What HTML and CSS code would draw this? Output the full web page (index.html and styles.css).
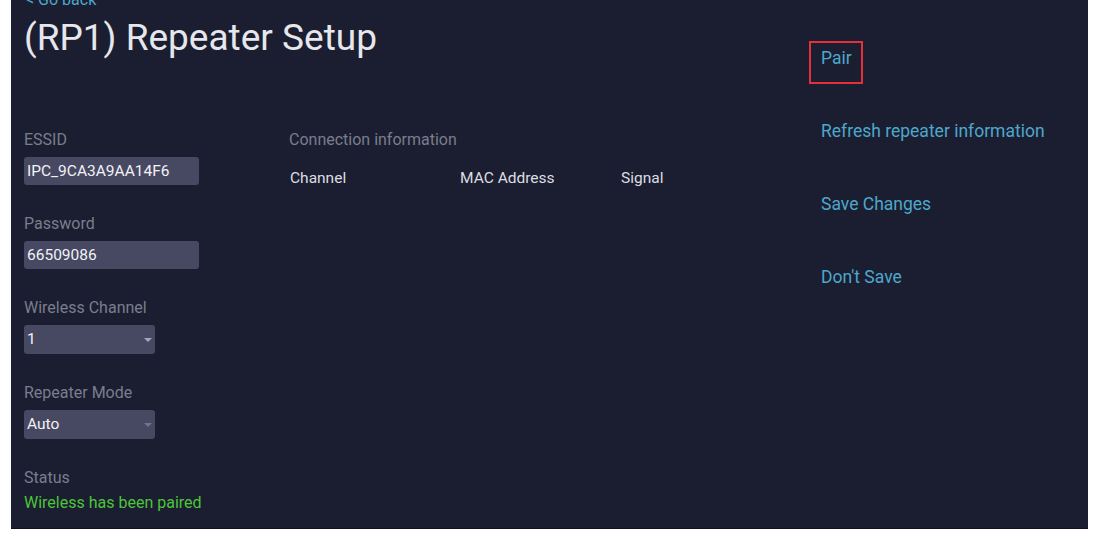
FILE: index.html
```html
<!DOCTYPE html>
<html lang="en">

<head>
    <meta charset="UTF-8">
    <meta name="viewport" content="width=device-width, initial-scale=1.0">
    <title>Repeater Setup</title>
    <link rel="stylesheet" href="styles.css">
</head>

<body>
    <div class="panel">
        <div class="main">
            <a class="back" href="#">&lt; Go back</a>
            <h1 class="title">(RP1) Repeater Setup</h1>

            <div class="columns">
                <!-- Settings form -->
                <div class="settings">
                    <div class="field">
                        <label>ESSID</label>
                        <div class="input">IPC_9CA3A9AA14F6</div>
                    </div>
                    <div class="field">
                        <label>Password</label>
                        <div class="input">66509086</div>
                    </div>
                    <div class="field">
                        <label>Wireless Channel</label>
                        <div class="select">1<span class="caret"></span></div>
                    </div>
                    <div class="field">
                        <label>Repeater Mode</label>
                        <div class="select">Auto<span class="caret dim"></span></div>
                    </div>
                    <div class="field">
                        <label>Status</label>
                        <div class="status">Wireless has been paired</div>
                    </div>
                </div>

                <!-- Connection info -->
                <div class="connection">
                    <label>Connection information</label>
                    <div class="conn-head">
                        <span class="c-channel">Channel</span>
                        <span class="c-mac">MAC Address</span>
                        <span class="c-signal">Signal</span>
                    </div>
                </div>
            </div>
        </div>

        <div class="actions">
            <a class="action pair" href="#">Pair</a>
            <a class="action" href="#">Refresh repeater information</a>
            <a class="action" href="#">Save Changes</a>
            <a class="action" href="#">Don't Save</a>
        </div>
    </div>
</body>

</html>
```

FILE: styles.css
```css
body {
    margin: 0;
    background: #ffffff;
    font-family: Roboto, "Liberation Sans", Arial, sans-serif;
}

.panel {
    margin-left: 11px;
    width: 1077px;
    height: 529px;
    background: #1b1e30;
    border-bottom: 1px solid #10131f;
    box-sizing: border-box;
    display: flex;
    overflow: hidden;
}

.main {
    width: 798px;
    padding-left: 13px;
    box-sizing: border-box;
}

.back {
    display: block;
    margin-top: -10px;
    height: 20px;
    line-height: 20px;
    font-size: 16px;
    color: #4ea7cc;
    text-decoration: none;
    padding-left: 2px;
}

.title {
    margin: 6px 0 0;
    font-size: 37px;
    line-height: 44px;
    font-weight: 400;
    color: #e6e7ec;
}

.columns {
    display: flex;
    margin-top: 70px;
}

label {
    display: block;
    font-size: 16px;
    line-height: 20px;
    color: #7a7d8d;
}

.settings {
    width: 265px;
}

.field {
    margin-bottom: 29px;
}

.field label {
    margin-bottom: 7px;
}

.input,
.select {
    position: relative;
    height: 28px;
    line-height: 28px;
    background: #474862;
    border-radius: 3px;
    font-size: 15.5px;
    color: #f2f2f5;
    padding-left: 3px;
    box-sizing: border-box;
}

.input {
    width: 175px;
}

.select {
    width: 131px;
    height: 29px;
    line-height: 29px;
}

.caret {
    position: absolute;
    right: 3px;
    top: 13px;
    border-left: 4px solid transparent;
    border-right: 4px solid transparent;
    border-top: 4px solid #a5a6b8;
}

.caret.dim {
    border-top-color: #72738c;
}

.status {
    margin-top: -2px;
    font-size: 16px;
    line-height: 20px;
    color: #4cc53a;
}

.connection {
    width: 520px;
}

.conn-head {
    display: flex;
    margin-top: 18px;
    font-size: 15.5px;
    line-height: 20px;
    color: #dcdde3;
}

.c-channel {
    width: 170px;
    padding-left: 1px;
}

.c-mac {
    width: 161px;
}

.actions {
    display: flex;
    flex-direction: column;
    align-items: flex-start;
    padding-top: 48px;
    padding-left: 12px;
    gap: 53px;
}

.action {
    font-size: 17.5px;
    line-height: 20px;
    color: #4ea7cc;
    text-decoration: none;
    position: relative;
}

/* red highlight box around Pair */
.pair::after {
    content: "";
    position: absolute;
    left: -12px;
    top: -7px;
    width: 50px;
    height: 39px;
    border: 2px solid #e3303b;
}
```
